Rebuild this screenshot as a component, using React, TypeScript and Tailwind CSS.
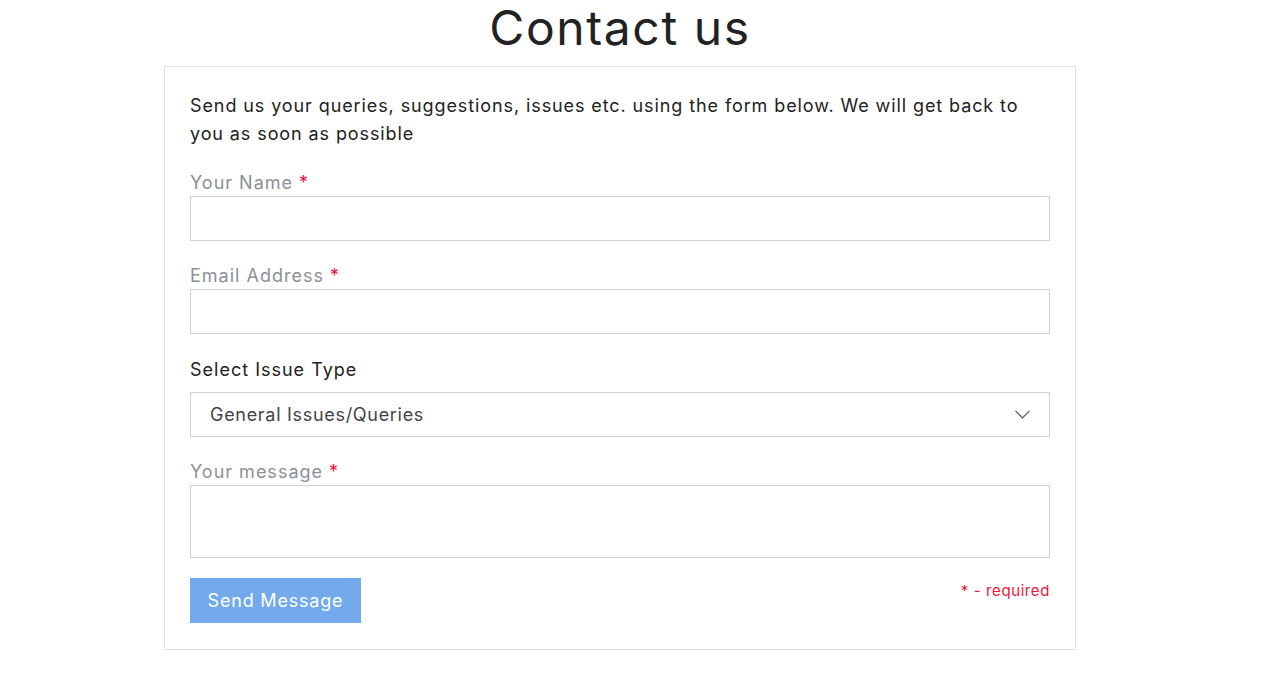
const font = { fontFamily: 'Inter, "Noto Sans", sans-serif' };

function Label({ text, required, dark }: { text: string; required?: boolean; dark?: boolean }) {
  return (
    <label
      className={`block text-[18px] leading-[20px] tracking-[1px] ${dark ? 'text-[#222] mb-[12px]' : 'text-[#8b9099] mb-[3px]'}`}
    >
      {text}
      {required && <span className="text-[#f2133c]"> *</span>}
    </label>
  );
}

export default function App() {
  return (
    <div className="min-h-screen bg-white text-[#222]" style={font}>
      <div className="w-[912px] ml-[164px]">
        <h1 className="text-center text-[48px] leading-[56px] mb-[10px] font-normal tracking-[1.6px] text-[#222]">
          Contact us
        </h1>

        <div className="border border-[#dddddd] px-[25px] pt-[25px] pb-[26px]">
          <p className="text-[18px] leading-[28px] tracking-[0.9px] text-[#222] mb-[25px] pr-[10px]">
            Send us your queries, suggestions, issues etc. using the form below. We will get back to you as soon as possible
          </p>

          <div className="mb-[25px]">
            <Label text="Your Name" required />
            <input className="block w-full h-[45px] border border-[#ced1d8] outline-none" />
          </div>

          <div className="mb-[26px]">
            <Label text="Email Address" required />
            <input className="block w-full h-[45px] border border-[#ced1d8] outline-none" />
          </div>

          <div className="mb-[25px]">
            <Label text="Select Issue Type" dark />
            <div className="flex items-center justify-between h-[45px] border border-[#ced1d8] pl-[19px] pr-[19px] text-[18px] tracking-[0.7px] text-[#444]">
              <span>General Issues/Queries</span>
              <svg width="15" height="9" viewBox="0 0 15 9" fill="none" stroke="#555" strokeWidth="1.2">
                <polyline points="0.5,0.8 7.5,7.8 14.5,0.8" />
              </svg>
            </div>
          </div>

          <div className="mb-[20px]">
            <Label text="Your message" required />
            <textarea className="block w-full h-[73px] border border-[#ced1d8] outline-none resize-none" />
          </div>

          <div className="flex items-start justify-between">
            <button className="h-[45px] w-[171px] bg-[#72aaeb] text-white text-[18px] tracking-[0.8px]">
              Send Message
            </button>
            <span className="text-[15px] tracking-[0.6px] text-[#f2133c] mt-[2px]">* - required</span>
          </div>
        </div>
      </div>
    </div>
  );
}
